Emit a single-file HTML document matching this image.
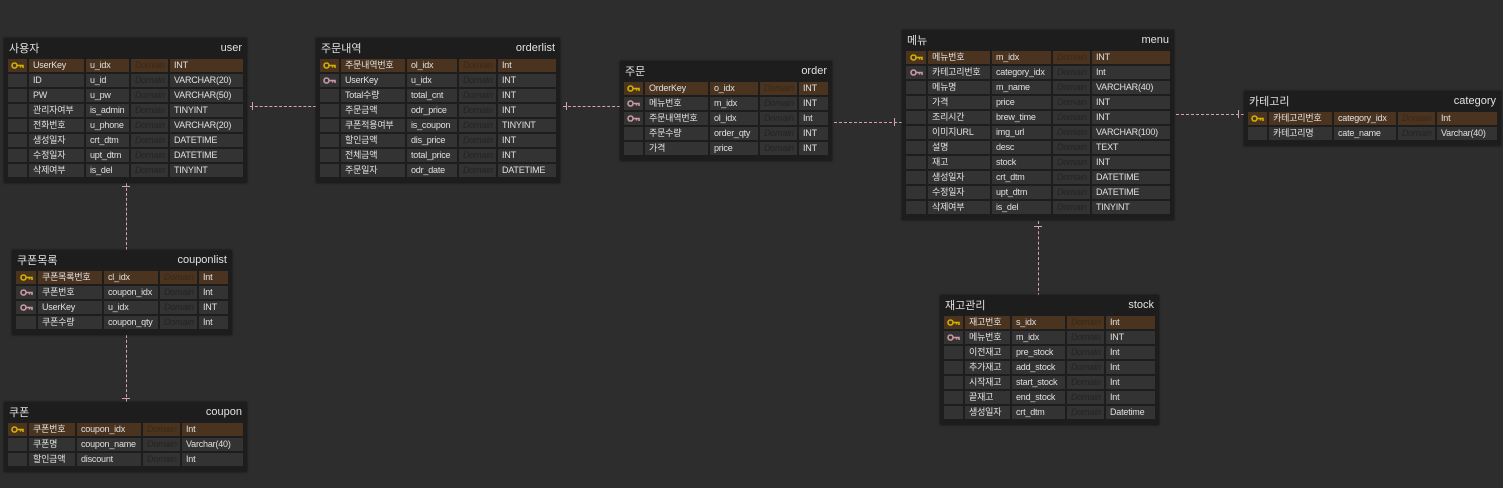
<!DOCTYPE html>
<html><head><meta charset="utf-8"><style>
body{margin:0;width:1503px;height:488px;background:#2d2d2d;overflow:hidden;position:relative;font-family:"Liberation Sans","Noto Sans CJK KR",sans-serif;font-size:9px;color:#e0e0e0}
.t{position:absolute;background:#1d1d1d;padding:0 4px 4px 4px;box-shadow:0 0 2px #111}
.h{height:21px;display:flex;justify-content:space-between;align-items:center;font-size:11px;padding:0 1px 2px 1px;box-sizing:border-box}
.r{display:grid;grid-column-gap:2px;margin-bottom:2px;height:13px}
.r div{background:#333333;line-height:13px;padding-left:4px;white-space:nowrap;overflow:hidden;letter-spacing:-0.2px}
.r.pk div{background:#4a3420}
.r div.d{color:#242424;font-style:italic}
.r.pk div.d{color:#3a2816}
.r div.i{padding:0;display:flex;align-items:center;justify-content:center}
.ln{position:absolute;border-color:#d7a3ab}
.hl{height:0;border-top:1px dashed #d7a3ab}
.vl{width:0;border-left:1px dashed #d7a3ab}
.tk{position:absolute;background:#d7a3ab}
</style></head><body>
<svg width="0" height="0" style="position:absolute"><defs>
<g id="ky"><circle cx="3.5" cy="3.5" r="2.5" fill="none" stroke="#d4b000" stroke-width="1.6"/><path d="M6 3.5h6v2.5M9.5 3.5v2" stroke="#d4b000" stroke-width="1.6" fill="none"/></g>
<g id="kf"><circle cx="3.5" cy="3.5" r="2.5" fill="none" stroke="#c99aa3" stroke-width="1.6"/><path d="M6 3.5h6v2.5M9.5 3.5v2" stroke="#c99aa3" stroke-width="1.6" fill="none"/></g>
</defs></svg>

<div class="ln hl" style="left:250px;top:106px;width:66px"></div>
<div class="tk" style="left:252px;top:102px;width:1px;height:8px"></div>
<div class="ln hl" style="left:563px;top:106px;width:57px"></div>
<div class="tk" style="left:566px;top:102px;width:1px;height:8px"></div>
<div class="ln hl" style="left:834px;top:122px;width:68px"></div>
<div class="tk" style="left:894px;top:118px;width:1px;height:8px"></div>
<div class="ln hl" style="left:1176px;top:114px;width:68px"></div>
<div class="tk" style="left:1238px;top:110px;width:1px;height:8px"></div>
<div class="ln vl" style="left:126px;top:183px;height:67px"></div>
<div class="tk" style="left:122px;top:186px;width:8px;height:1px"></div>
<div class="ln vl" style="left:126px;top:335px;height:67px"></div>
<div class="tk" style="left:122px;top:398px;width:8px;height:1px"></div>
<div class="ln vl" style="left:1038px;top:221px;height:75px"></div>
<div class="tk" style="left:1034px;top:226px;width:8px;height:1px"></div>

<div class="t" style="left:4px;top:38px;width:235px">
<div class="h"><span>사용자</span><span>user</span></div>
<div class="r pk" style="grid-template-columns:19px 55px 43px 37px 73px"><div class="i"><svg width="13" height="7"><use href="#ky"/></svg></div><div>UserKey</div><div>u_idx</div><div class="d">Domain</div><div>INT</div></div>
<div class="r" style="grid-template-columns:19px 55px 43px 37px 73px"><div></div><div>ID</div><div>u_id</div><div class="d">Domain</div><div>VARCHAR(20)</div></div>
<div class="r" style="grid-template-columns:19px 55px 43px 37px 73px"><div></div><div>PW</div><div>u_pw</div><div class="d">Domain</div><div>VARCHAR(50)</div></div>
<div class="r" style="grid-template-columns:19px 55px 43px 37px 73px"><div></div><div>관리자여부</div><div>is_admin</div><div class="d">Domain</div><div>TINYINT</div></div>
<div class="r" style="grid-template-columns:19px 55px 43px 37px 73px"><div></div><div>전화번호</div><div>u_phone</div><div class="d">Domain</div><div>VARCHAR(20)</div></div>
<div class="r" style="grid-template-columns:19px 55px 43px 37px 73px"><div></div><div>생성일자</div><div>crt_dtm</div><div class="d">Domain</div><div>DATETIME</div></div>
<div class="r" style="grid-template-columns:19px 55px 43px 37px 73px"><div></div><div>수정일자</div><div>upt_dtm</div><div class="d">Domain</div><div>DATETIME</div></div>
<div class="r" style="grid-template-columns:19px 55px 43px 37px 73px"><div></div><div>삭제여부</div><div>is_del</div><div class="d">Domain</div><div>TINYINT</div></div>
</div>

<div class="t" style="left:316px;top:38px;width:236px">
<div class="h"><span>주문내역</span><span>orderlist</span></div>
<div class="r pk" style="grid-template-columns:19px 64px 50px 37px 58px"><div class="i"><svg width="13" height="7"><use href="#ky"/></svg></div><div>주문내역번호</div><div>ol_idx</div><div class="d">Domain</div><div>Int</div></div>
<div class="r" style="grid-template-columns:19px 64px 50px 37px 58px"><div class="i"><svg width="13" height="7"><use href="#kf"/></svg></div><div>UserKey</div><div>u_idx</div><div class="d">Domain</div><div>INT</div></div>
<div class="r" style="grid-template-columns:19px 64px 50px 37px 58px"><div></div><div>Total수량</div><div>total_cnt</div><div class="d">Domain</div><div>INT</div></div>
<div class="r" style="grid-template-columns:19px 64px 50px 37px 58px"><div></div><div>주문금액</div><div>odr_price</div><div class="d">Domain</div><div>INT</div></div>
<div class="r" style="grid-template-columns:19px 64px 50px 37px 58px"><div></div><div>쿠폰적용여부</div><div>is_coupon</div><div class="d">Domain</div><div>TINYINT</div></div>
<div class="r" style="grid-template-columns:19px 64px 50px 37px 58px"><div></div><div>할인금액</div><div>dis_price</div><div class="d">Domain</div><div>INT</div></div>
<div class="r" style="grid-template-columns:19px 64px 50px 37px 58px"><div></div><div>전체금액</div><div>total_price</div><div class="d">Domain</div><div>INT</div></div>
<div class="r" style="grid-template-columns:19px 64px 50px 37px 58px"><div></div><div>주문일자</div><div>odr_date</div><div class="d">Domain</div><div>DATETIME</div></div>
</div>

<div class="t" style="left:620px;top:61px;width:204px">
<div class="h"><span>주문</span><span>order</span></div>
<div class="r pk" style="grid-template-columns:19px 63px 48px 37px 29px"><div class="i"><svg width="13" height="7"><use href="#ky"/></svg></div><div>OrderKey</div><div>o_idx</div><div class="d">Domain</div><div>INT</div></div>
<div class="r" style="grid-template-columns:19px 63px 48px 37px 29px"><div class="i"><svg width="13" height="7"><use href="#kf"/></svg></div><div>메뉴번호</div><div>m_idx</div><div class="d">Domain</div><div>INT</div></div>
<div class="r" style="grid-template-columns:19px 63px 48px 37px 29px"><div class="i"><svg width="13" height="7"><use href="#kf"/></svg></div><div>주문내역번호</div><div>ol_idx</div><div class="d">Domain</div><div>Int</div></div>
<div class="r" style="grid-template-columns:19px 63px 48px 37px 29px"><div></div><div>주문수량</div><div>order_qty</div><div class="d">Domain</div><div>INT</div></div>
<div class="r" style="grid-template-columns:19px 63px 48px 37px 29px"><div></div><div>가격</div><div>price</div><div class="d">Domain</div><div>INT</div></div>
</div>

<div class="t" style="left:902px;top:30px;width:264px">
<div class="h"><span>메뉴</span><span>menu</span></div>
<div class="r pk" style="grid-template-columns:20px 62px 59px 37px 78px"><div class="i"><svg width="13" height="7"><use href="#ky"/></svg></div><div>메뉴번호</div><div>m_idx</div><div class="d">Domain</div><div>INT</div></div>
<div class="r" style="grid-template-columns:20px 62px 59px 37px 78px"><div class="i"><svg width="13" height="7"><use href="#kf"/></svg></div><div>카테고리번호</div><div>category_idx</div><div class="d">Domain</div><div>Int</div></div>
<div class="r" style="grid-template-columns:20px 62px 59px 37px 78px"><div></div><div>메뉴명</div><div>m_name</div><div class="d">Domain</div><div>VARCHAR(40)</div></div>
<div class="r" style="grid-template-columns:20px 62px 59px 37px 78px"><div></div><div>가격</div><div>price</div><div class="d">Domain</div><div>INT</div></div>
<div class="r" style="grid-template-columns:20px 62px 59px 37px 78px"><div></div><div>조리시간</div><div>brew_time</div><div class="d">Domain</div><div>INT</div></div>
<div class="r" style="grid-template-columns:20px 62px 59px 37px 78px"><div></div><div>이미지URL</div><div>img_url</div><div class="d">Domain</div><div>VARCHAR(100)</div></div>
<div class="r" style="grid-template-columns:20px 62px 59px 37px 78px"><div></div><div>설명</div><div>desc</div><div class="d">Domain</div><div>TEXT</div></div>
<div class="r" style="grid-template-columns:20px 62px 59px 37px 78px"><div></div><div>재고</div><div>stock</div><div class="d">Domain</div><div>INT</div></div>
<div class="r" style="grid-template-columns:20px 62px 59px 37px 78px"><div></div><div>생성일자</div><div>crt_dtm</div><div class="d">Domain</div><div>DATETIME</div></div>
<div class="r" style="grid-template-columns:20px 62px 59px 37px 78px"><div></div><div>수정일자</div><div>upt_dtm</div><div class="d">Domain</div><div>DATETIME</div></div>
<div class="r" style="grid-template-columns:20px 62px 59px 37px 78px"><div></div><div>삭제여부</div><div>is_del</div><div class="d">Domain</div><div>TINYINT</div></div>
</div>

<div class="t" style="left:1244px;top:91px;width:249px">
<div class="h"><span>카테고리</span><span>category</span></div>
<div class="r pk" style="grid-template-columns:19px 63px 62px 37px 60px"><div class="i"><svg width="13" height="7"><use href="#ky"/></svg></div><div>카테고리번호</div><div>category_idx</div><div class="d">Domain</div><div>Int</div></div>
<div class="r" style="grid-template-columns:19px 63px 62px 37px 60px"><div></div><div>카테고리명</div><div>cate_name</div><div class="d">Domain</div><div>Varchar(40)</div></div>
</div>

<div class="t" style="left:12px;top:250px;width:212px">
<div class="h"><span>쿠폰목록</span><span>couponlist</span></div>
<div class="r pk" style="grid-template-columns:20px 64px 54px 37px 29px"><div class="i"><svg width="13" height="7"><use href="#ky"/></svg></div><div>쿠폰목록번호</div><div>cl_idx</div><div class="d">Domain</div><div>Int</div></div>
<div class="r" style="grid-template-columns:20px 64px 54px 37px 29px"><div class="i"><svg width="13" height="7"><use href="#kf"/></svg></div><div>쿠폰번호</div><div>coupon_idx</div><div class="d">Domain</div><div>Int</div></div>
<div class="r" style="grid-template-columns:20px 64px 54px 37px 29px"><div class="i"><svg width="13" height="7"><use href="#kf"/></svg></div><div>UserKey</div><div>u_idx</div><div class="d">Domain</div><div>INT</div></div>
<div class="r" style="grid-template-columns:20px 64px 54px 37px 29px"><div></div><div>쿠폰수량</div><div>coupon_qty</div><div class="d">Domain</div><div>Int</div></div>
</div>

<div class="t" style="left:4px;top:402px;width:235px">
<div class="h"><span>쿠폰</span><span>coupon</span></div>
<div class="r pk" style="grid-template-columns:19px 46px 64px 37px 61px"><div class="i"><svg width="13" height="7"><use href="#ky"/></svg></div><div>쿠폰번호</div><div>coupon_idx</div><div class="d">Domain</div><div>Int</div></div>
<div class="r" style="grid-template-columns:19px 46px 64px 37px 61px"><div></div><div>쿠폰명</div><div>coupon_name</div><div class="d">Domain</div><div>Varchar(40)</div></div>
<div class="r" style="grid-template-columns:19px 46px 64px 37px 61px"><div></div><div>할인금액</div><div>discount</div><div class="d">Domain</div><div>Int</div></div>
</div>

<div class="t" style="left:940px;top:295px;width:211px">
<div class="h"><span>재고관리</span><span>stock</span></div>
<div class="r pk" style="grid-template-columns:19px 45px 53px 37px 49px"><div class="i"><svg width="13" height="7"><use href="#ky"/></svg></div><div>재고번호</div><div>s_idx</div><div class="d">Domain</div><div>Int</div></div>
<div class="r" style="grid-template-columns:19px 45px 53px 37px 49px"><div class="i"><svg width="13" height="7"><use href="#kf"/></svg></div><div>메뉴번호</div><div>m_idx</div><div class="d">Domain</div><div>INT</div></div>
<div class="r" style="grid-template-columns:19px 45px 53px 37px 49px"><div></div><div>이전재고</div><div>pre_stock</div><div class="d">Domain</div><div>Int</div></div>
<div class="r" style="grid-template-columns:19px 45px 53px 37px 49px"><div></div><div>추가재고</div><div>add_stock</div><div class="d">Domain</div><div>Int</div></div>
<div class="r" style="grid-template-columns:19px 45px 53px 37px 49px"><div></div><div>시작재고</div><div>start_stock</div><div class="d">Domain</div><div>Int</div></div>
<div class="r" style="grid-template-columns:19px 45px 53px 37px 49px"><div></div><div>끝재고</div><div>end_stock</div><div class="d">Domain</div><div>Int</div></div>
<div class="r" style="grid-template-columns:19px 45px 53px 37px 49px"><div></div><div>생성일자</div><div>crt_dtm</div><div class="d">Domain</div><div>Datetime</div></div>
</div>
</body></html>
